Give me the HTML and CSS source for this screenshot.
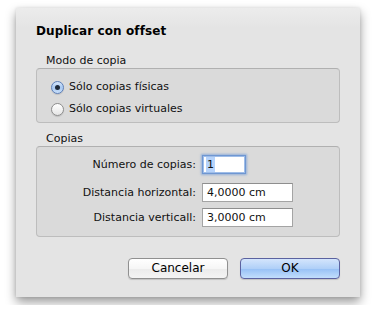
FILE: index.html
```html
<!DOCTYPE html>
<html lang="es">
<head>
<meta charset="UTF-8">
<link rel="stylesheet" href="styles.css">
</head>
<body>
<div class="sheet">
    <div class="title">Duplicar con offset</div>

    <div class="group-label">Modo de copia</div>
    <div class="group group-mode">
        <div class="radio-row"><i class="radio checked"></i><span>Sólo copias físicas</span></div>
        <div class="radio-row"><i class="radio"></i><span>Sólo copias virtuales</span></div>
    </div>

    <div class="group-label">Copias</div>
    <div class="group group-copies">
        <div class="field-row first">
            <label>Número de copias:</label>
            <div class="field focused"><span class="sel">1</span></div>
        </div>
        <div class="field-row">
            <label>Distancia horizontal:</label>
            <div class="field">4,0000 cm</div>
        </div>
        <div class="field-row">
            <label>Distancia verticall:</label>
            <div class="field">3,0000 cm</div>
        </div>
    </div>

    <div class="buttons">
        <div class="btn">Cancelar</div>
        <div class="btn default">OK</div>
    </div>
</div>
</body>
</html>
```

FILE: styles.css
```css
body {
  margin: 0;
  padding: 8px 16px;
  background: #fff;
  font-family: "DejaVu Sans", "Liberation Sans", sans-serif;
  font-size: 11px;
  color: #111;
}

.sheet {
  width: 344px;
  height: 289px;
  box-sizing: border-box;
  padding: 15px 20px 18px;
  background: linear-gradient(to bottom, #ececec, #e4e4e4 20px, #e4e4e4);
  box-shadow: 0 5px 10px rgba(0, 0, 0, .4), 0 0 3px rgba(0, 0, 0, .1);
  display: flex;
  flex-direction: column;
}

.title {
  font-size: 12px;
  font-weight: bold;
  letter-spacing: .1px;
  line-height: 16px;
  color: #000;
}

.group-label {
  line-height: 14px;
  padding-left: 10px;
  margin-top: 15px;
}
.group-mode + .group-label { margin-top: 9px; }

.group {
  background: #dadada;
  border: 1px solid #bdbdbd;
  border-top-color: #b0b0b0;
  border-radius: 4px;
}

.group-mode {
  padding: 10px 0 5px 14px;
  display: flex;
  flex-direction: column;
  gap: 6px;
}

.radio-row {
  display: flex;
  align-items: center;
  gap: 5px;
  line-height: 16px;
}

.radio {
  width: 13px;
  height: 13px;
  box-sizing: border-box;
  border-radius: 50%;
  border: 1px solid #8d8d8d;
  background: linear-gradient(to bottom, #fff, #f2f2f2 50%, #e4e4e4);
  box-shadow: 0 1px 1px rgba(0, 0, 0, .12);
  display: grid;
  place-items: center;
}
.radio.checked {
  border-color: #5d7fb8;
  background: linear-gradient(to bottom, #d6e6fb, #a9c9f2 50%, #c9dff9);
}
.radio.checked::after {
  content: "";
  width: 5px;
  height: 5px;
  border-radius: 50%;
  background: #1e2a3a;
}

.group-copies {
  padding: 8px 0 9px;
  display: flex;
  flex-direction: column;
  gap: 6px;
}
.field-row {
  display: grid;
  grid-template-columns: 159px auto;
  column-gap: 6px;
  align-items: center;
  height: 19px;
}
.field-row.first { margin-bottom: 3px; }
.field-row label {
  text-align: right;
}

.field {
  width: 91px;
  height: 19px;
  box-sizing: border-box;
  padding-left: 4px;
  line-height: 17px;
  background: #fff;
  border: 1px solid #a4a4a4;
  border-top-color: #8e8e8e;
}
.field.focused {
  width: 44px;
  padding-left: 3px;
  border: 1px solid #6f97d2;
  box-shadow: inset 0 0 0 1px #9fbde8, 0 0 2px 1px rgba(90, 140, 215, .55);
}
.sel {
  background: #b6d3fb;
  padding: 1px 1px;
}

.buttons {
  margin-top: auto;
  display: flex;
  justify-content: flex-end;
  gap: 12px;
}
.btn {
  width: 100px;
  height: 21px;
  box-sizing: border-box;
  border: 1px solid #909090;
  border-radius: 4px;
  background: linear-gradient(to bottom, #fff, #f6f6f6 50%, #ebebeb 51%, #f4f4f4);
  box-shadow: 0 1px 1px rgba(0, 0, 0, .15);
  font-size: 12px;
  line-height: 19px;
  text-align: center;
  color: #000;
}
.btn.default {
  border-color: #5b62a0;
  background: linear-gradient(to bottom, #d4e5fc, #b0d0f8 50%, #96c0f5 51%, #c2defc);
}
```
